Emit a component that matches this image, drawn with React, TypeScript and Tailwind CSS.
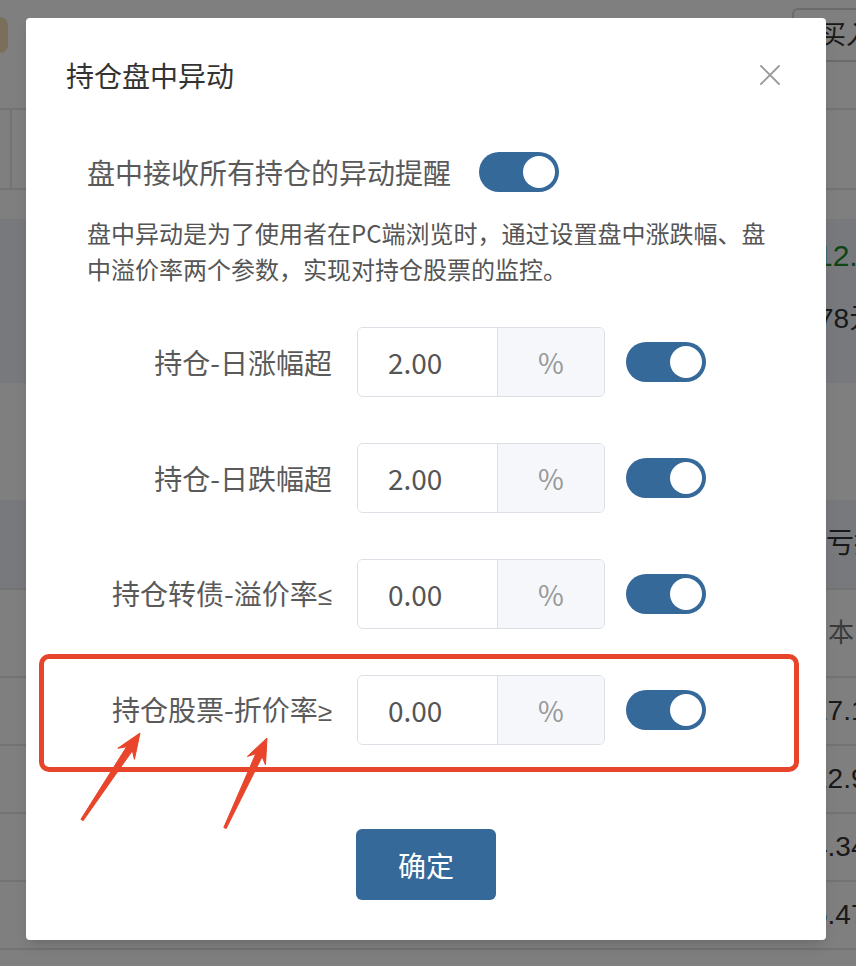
import React from "react";

const labels = [
  { label: "持仓-日涨幅超", value: "2.00" },
  { label: "持仓-日跌幅超", value: "2.00" },
  { label: "持仓转债-溢价率", sign: "≤", value: "0.00" },
];

const Toggle = () => (
  <div className="w-[80px] h-[40px] rounded-full bg-[#34699a] flex items-center justify-end pr-[4px] shrink-0">
    <div className="w-[32px] h-[32px] rounded-full bg-white" />
  </div>
);

const SettingRow = ({ label, sign, value }: { label: string; sign?: string; value: string }) => (
  <div className="flex items-center h-[70px]">
    <div className="w-[245px] text-right text-[28px] leading-[28px] text-[#5a5a5a] whitespace-nowrap">
      {label}
      {sign && <span className="font-['Liberation_Sans',sans-serif] text-[26px]">{sign}</span>}
    </div>
    <div className="ml-[25px] w-[248px] h-[70px] flex border border-[#dcdfe6] rounded-[6px] overflow-hidden">
      <div className="w-[140px] flex items-center pl-[30px] text-[28px] text-[#555] bg-white border-r border-[#dcdfe6]">
        {value}
      </div>
      <div className="flex-1 flex items-center justify-center bg-[#f5f7fa] text-[28px] text-[#999]">%</div>
    </div>
    <div className="ml-[21px]">
      <Toggle />
    </div>
  </div>
);

// red annotation arrow, tail -> tip
function arrowPoints(tx: number, ty: number, px: number, py: number) {
  const dx = px - tx;
  const dy = py - ty;
  const len = Math.hypot(dx, dy);
  const ux = dx / len;
  const uy = dy / len;
  const nx = -uy;
  const ny = ux;
  const head = (d: number, w: number) => `${px - ux * d + nx * w},${py - uy * d + ny * w}`;
  const tail = (w: number) => `${tx + nx * w},${ty + ny * w}`;
  return [head(0, 0), head(25, 10), head(19, 3.5), tail(1.3), tail(-1.3), head(19, -3.5), head(25, -10)].join(" ");
}

const BackgroundPage = () => (
  <div className="flex flex-col text-[#333] font-['Liberation_Sans','Noto_Sans_CJK_SC',sans-serif]">
    {/* top bar */}
    <div className="h-[108px] flex items-start justify-between">
      <div className="mt-[17px] -ml-[26px] w-[34px] h-[36px] rounded-lg bg-[#f4dfb4]" />
      <div className="mt-[8px] -mr-[30px] h-[54px] w-[94px] border-2 border-[#d6d6d6] rounded-md flex items-center pl-[26px] text-[26px]">
        买入
      </div>
    </div>
    <div className="h-[82px] border-y-2 border-[#e6e6e6] flex">
      <div className="w-[12px] border-r-2 border-[#e6e6e6]" />
    </div>
    <div className="h-[29px]" />
    {/* summary band */}
    <div className="h-[164px] bg-[#eef3fa] flex flex-col pt-[14px]">
      <div className="pl-[816px] text-[30px] text-[#1f8a2a] whitespace-nowrap">12.85</div>
      <div className="pl-[818px] mt-[20px] text-[28px] whitespace-nowrap">78元</div>
    </div>
    <div className="h-[117px]" />
    <div className="h-[90px] bg-[#eef3fa] border-b-2 border-[#e6e6e6] flex items-center pl-[826px] text-[28px] whitespace-nowrap">
      亏损
    </div>
    <div className="h-[88px] border-b-2 border-[#e6e6e6] flex items-center pl-[828px] text-[26px] text-[#777] whitespace-nowrap">
      本 ≑
    </div>
    {["17.19", "12.92", "4.34", "5.47"].map((v) => (
      <div key={v} className="h-[68px] border-b-2 border-[#e6e6e6] flex items-center pl-[812px] text-[28px] whitespace-nowrap">
        {v}
      </div>
    ))}
  </div>
);

export default function App() {
  return (
    <div className="relative w-[856px] h-[966px] overflow-hidden bg-white">
      <BackgroundPage />

      {/* mask + dialog */}
      <div className="absolute inset-0 bg-black/50 pl-[26px] pt-[18px] font-['Noto_Sans_CJK_SC','PingFang_SC',sans-serif]">
        <div className="w-[800px] bg-white rounded-[4px] shadow-lg flex flex-col">
          {/* header */}
          <div className="flex items-center justify-between pl-[40px] pr-[46px] pt-[43px]">
            <h2 className="text-[28px] leading-[28px] text-[#333]">持仓盘中异动</h2>
            <svg width="20" height="20" viewBox="0 0 20 20" className="text-[#999]">
              <path d="M1 1L19 19M19 1L1 19" stroke="currentColor" strokeWidth="1.8" strokeLinecap="round" />
            </svg>
          </div>

          {/* body */}
          <div className="pl-[61px] pr-[40px]">
            <div className="mt-[63px] flex items-center h-[40px]">
              <span className="text-[28px] leading-[28px] text-[#5a5a5a] whitespace-nowrap">盘中接收所有持仓的异动提醒</span>
              <div className="ml-[28px]">
                <Toggle />
              </div>
            </div>
            <p className="mt-[23px] text-[24px] leading-[36px] text-[#555]">
              盘中异动是为了使用者在PC端浏览时，通过设置盘中涨跌幅、盘中溢价率两个参数，实现对持仓股票的监控。
            </p>

            <div className="mt-[40px] flex flex-col gap-[46px]">
              {labels.map((r) => (
                <SettingRow key={r.label} label={r.label} sign={r.sign} value={r.value} />
              ))}
            </div>

            {/* highlighted row */}
            <div className="mt-[25px] -ml-[48px] w-[760px] border-[5px] border-[#e6452c] rounded-[10px] pt-[16px] pb-[22px] pl-[43px]">
              <SettingRow label="持仓股票-折价率" sign="≥" value="0.00" />
            </div>
          </div>

          {/* footer */}
          <div className="flex justify-center mt-[57px] pb-[40px]">
            <button className="w-[140px] h-[71px] rounded-[6px] bg-[#34699a] text-white text-[28px]">确定</button>
          </div>
        </div>
      </div>

      {/* annotation arrows */}
      <svg className="absolute inset-0 pointer-events-none" width="856" height="966">
        <polygon points={arrowPoints(82, 820, 140, 733)} fill="#e8452b" stroke="#e8452b" strokeWidth="1" strokeLinejoin="round" />
        <polygon points={arrowPoints(225, 828, 267, 738)} fill="#e8452b" stroke="#e8452b" strokeWidth="1" strokeLinejoin="round" />
      </svg>
    </div>
  );
}
